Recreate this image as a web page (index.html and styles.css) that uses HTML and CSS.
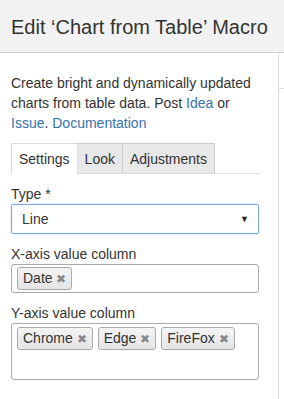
FILE: index.html
```html
<!DOCTYPE html>
<html lang="en">
<head>
  <meta charset="UTF-8">
  <title>Edit Macro</title>
  <link rel="stylesheet" href="styles.css">
</head>
<body>
  <div class="header">Edit ‘Chart from Table’ Macro</div>
  <div class="main">
    <div class="panel">
      <p class="desc">Create bright and dynamically updated charts from table data. Post <a href="#">Idea</a> or <a href="#">Issue</a>. <a href="#">Documentation</a></p>
      <div class="tabs">
        <div class="tab active">Settings</div>
        <div class="tab">Look</div>
        <div class="tab">Adjustments</div>
      </div>
      <label class="label">Type *</label>
      <div class="select">
        <span>Line</span>
        <span class="arrow">▼</span>
      </div>
      <label class="label">X-axis value column</label>
      <div class="tagbox">
        <span class="tag">Date <b>✖</b></span>
      </div>
      <label class="label">Y-axis value column</label>
      <div class="tagbox tall">
        <span class="tag">Chrome <b>✖</b></span>
        <span class="tag">Edge <b>✖</b></span>
        <span class="tag">FireFox <b>✖</b></span>
      </div>
    </div>
    <div class="side"></div>
  </div>
</body>
</html>
```
FILE: styles.css
```css
body {
  margin: 0;
  font-family: "Liberation Sans", Arial, sans-serif;
  color: #333;
  background: #fff;
  font-size: 14px;
}
.header {
  height: 52px;
  line-height: 54px;
  padding-left: 11px;
  font-size: 20px;
  background: #f2f2f2;
  border-bottom: 1px solid #d0d0d0;
  white-space: nowrap;
  overflow: hidden;
}
.main {
  display: flex;
  height: 346px;
}
.panel {
  width: 256px;
  padding: 20px 11px 0 11px;
  border-right: 1px solid #ddd;
}
.side {
  flex: 1;
  margin-top: 35px;
  border-top: 1px solid #ddd;
}
.desc {
  margin: 0;
  line-height: 20px;
}
.desc a {
  color: #3572b0;
  text-decoration: none;
}
.tabs {
  display: flex;
  margin-top: 10px;
  width: 249px;
  height: 30px;
  border-bottom: 1px solid #ddd;
}
.tab {
  padding: 0 7px;
  line-height: 30px;
  background: #e8e8e8;
  border: 1px solid #ccc;
  border-bottom: none;
}
.tab + .tab {
  border-left: none;
}
.tab.active {
  background: #fff;
  border-color: #ddd;
  margin-bottom: -1px;
}
.label {
  display: block;
  line-height: 20px;
  margin-top: 10px;
}
.select {
  display: flex;
  justify-content: space-between;
  align-items: center;
  width: 248px;
  box-sizing: border-box;
  height: 30px;
  padding: 0 9px 0 10px;
  border: 1px solid #7fa7de;
  border-radius: 2px;
  box-shadow: 0 0 2px rgba(102, 150, 230, 0.4);
}
.arrow {
  font-size: 9px;
  color: #222;
}
.tagbox {
  display: flex;
  flex-wrap: wrap;
  align-content: flex-start;
  gap: 5px;
  width: 248px;
  box-sizing: border-box;
  height: 29px;
  padding: 2px 5px;
  border: 1px solid #aaa;
  border-radius: 3px;
}
.tagbox.tall {
  height: 57px;
  padding-top: 3px;
}
.tag {
  height: 21px;
  line-height: 21px;
  padding: 0 5px;
  border: 1px solid #aaa;
  border-radius: 3px;
  background: linear-gradient(#f4f4f4, #e4e4e4);
}
.tag b {
  color: #888;
  font-size: 12px;
  font-weight: normal;
}
```
